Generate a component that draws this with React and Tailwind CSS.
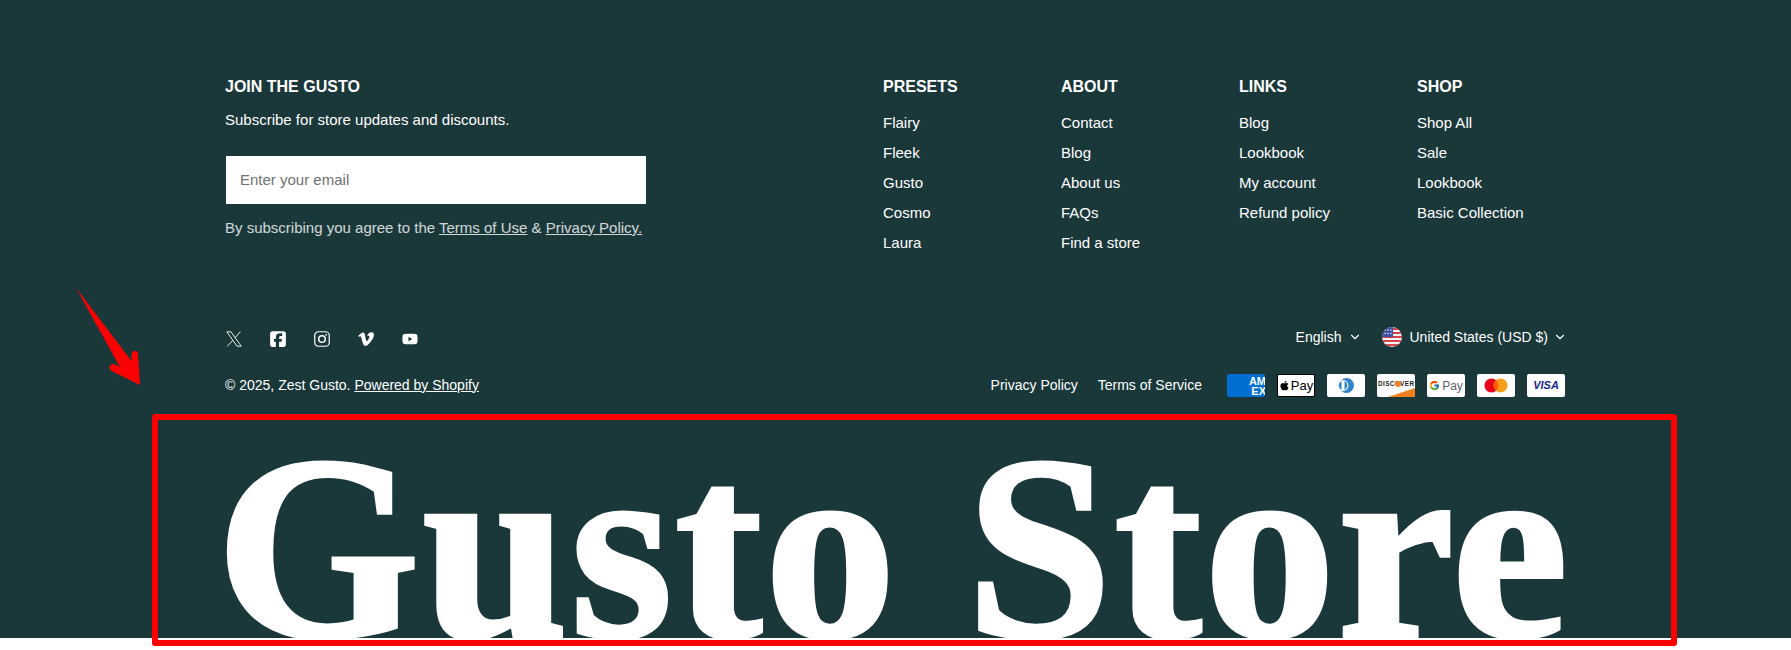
import { ChevronDown } from "lucide-react";
import { FaSquareFacebook, FaVimeoV, FaYoutube, FaApple } from "react-icons/fa6";
import { FcGoogle } from "react-icons/fc";

const COLUMNS = [
  { title: "PRESETS", width: "w-[178px]", links: ["Flairy", "Fleek", "Gusto", "Cosmo", "Laura"] },
  { title: "ABOUT", width: "w-[178px]", links: ["Contact", "Blog", "About us", "FAQs", "Find a store"] },
  { title: "LINKS", width: "w-[178px]", links: ["Blog", "Lookbook", "My account", "Refund policy"] },
  { title: "SHOP", width: "w-[150px]", links: ["Shop All", "Sale", "Lookbook", "Basic Collection"] },
];

function XIcon() {
  return (
    <svg width="16" height="16" viewBox="0 0 16 16" fill="none" stroke="white" strokeWidth="0.9">
      <path d="M0.8 0.8H5L15.2 15.2H11Z" />
      <path d="M14.4 0.6L9 6.8" />
      <path d="M7 9.2L1.2 15.4" />
    </svg>
  );
}

function InstagramIcon() {
  return (
    <svg width="16" height="16" viewBox="0 0 16 16" fill="none" stroke="white">
      <rect x="0.75" y="0.75" width="14.5" height="14.5" rx="3.6" strokeWidth="1.2" />
      <circle cx="8" cy="8" r="3.3" strokeWidth="1.5" />
      <circle cx="12.2" cy="3.8" r="0.9" fill="white" stroke="none" />
    </svg>
  );
}

function Flag() {
  return (
    <svg width="20" height="20" viewBox="0 0 20 20" className="shrink-0">
      <defs>
        <clipPath id="flag-clip">
          <circle cx="10" cy="10" r="10" />
        </clipPath>
      </defs>
      <g clipPath="url(#flag-clip)">
        <rect width="20" height="20" fill="#f4f4f4" />
        <rect y="1" width="20" height="2" fill="#d9424d" />
        <rect y="5" width="20" height="2" fill="#d9424d" />
        <rect y="9" width="20" height="2" fill="#d9424d" />
        <rect y="13" width="20" height="2" fill="#d9424d" />
        <rect y="17" width="20" height="2" fill="#d9424d" />
        <rect width="11" height="10" fill="#3f51a3" />
        <circle cx="3" cy="3" r="0.7" fill="white" />
        <circle cx="6" cy="3" r="0.7" fill="white" />
        <circle cx="9" cy="3" r="0.7" fill="white" />
        <circle cx="3" cy="6.5" r="0.7" fill="white" />
        <circle cx="6" cy="6.5" r="0.7" fill="white" />
        <circle cx="9" cy="6.5" r="0.7" fill="white" />
      </g>
    </svg>
  );
}

function Card({ children, className = "" }) {
  return <div className={`relative flex h-[23px] w-[38px] items-center justify-center overflow-hidden rounded-[2px] ${className || "bg-white"}`}>{children}</div>;
}

function PaymentIcons() {
  return (
    <div className="flex gap-3">
      <Card className="bg-[#016fd0]">
        <svg width="38" height="23" viewBox="0 0 38 23">
          <text x="39" y="11" textAnchor="end" fontSize="11" fontWeight="700" fill="white" fontFamily="Liberation Sans">AM</text>
          <text x="39" y="21" textAnchor="end" fontSize="11" fontWeight="700" fill="white" fontFamily="Liberation Sans">EX</text>
        </svg>
      </Card>
      <Card className="gap-[1px] border border-black bg-white text-black">
        <FaApple size={11} />
        <span className="text-[13px] leading-none">Pay</span>
      </Card>
      <Card>
        <svg width="38" height="23" viewBox="0 0 38 23">
          <circle cx="19.5" cy="11.5" r="7.5" fill="#3086c8" />
          <circle cx="16" cy="11.5" r="5.4" fill="white" />
          <path d="M14.5 7a5 5 0 0 0 0 9z" fill="#3086c8" />
          <path d="M17.5 7a5 5 0 0 1 0 9z" fill="#3086c8" />
        </svg>
      </Card>
      <Card>
        <svg width="38" height="23" viewBox="0 0 38 23">
          <path d="M11 23L38 14v9z" fill="#f48120" />
          <text x="1" y="12" fontSize="6.4" fontWeight="700" fill="#231f20" fontFamily="Liberation Sans" textLength="36">DISCOVER</text>
          <circle cx="21" cy="10" r="3" fill="#f48120" />
        </svg>
      </Card>
      <Card className="gap-[2px] bg-white text-[#5f6368]">
        <FcGoogle size={11} />
        <span className="text-[12px] leading-none">Pay</span>
      </Card>
      <Card>
        <svg width="38" height="23" viewBox="0 0 38 23">
          <circle cx="14.5" cy="11.5" r="7" fill="#eb001b" />
          <circle cx="23.5" cy="11.5" r="7" fill="#f79e1b" />
          <path d="M19 6.1a7 7 0 0 1 0 10.8a7 7 0 0 1 0-10.8z" fill="#ff5f00" />
        </svg>
      </Card>
      <Card>
        <span className="text-[11px] leading-none font-bold italic text-[#142688]">VISA</span>
      </Card>
    </div>
  );
}

export default function App() {
  return (
    <div className="relative min-h-[650px] overflow-hidden bg-white font-['Liberation_Sans',Arial,sans-serif] text-white">
      <footer className="h-[638px] overflow-hidden bg-[#1a373a] pt-[77px] pr-[224px] pl-[225px]">
        <div className="flex">
          <div className="flex-1">
            <h2 className="text-base leading-5 font-bold">JOIN THE GUSTO</h2>
            <p className="mt-[13px] text-[15px] leading-5">Subscribe for store updates and discounts.</p>
            <input
              placeholder="Enter your email"
              className="mt-[26px] ml-px block h-12 w-[420px] bg-white px-3.5 pb-0.5 text-[15px] text-black outline-none placeholder:text-[#707070]"
            />
            <p className="mt-3.5 text-[15px] leading-5 text-white/80">
              By subscribing you agree to the <a className="underline">Terms of Use</a> &amp; <a className="underline">Privacy Policy.</a>
            </p>
          </div>
          {COLUMNS.map((col) => (
            <div key={col.title} className={col.width}>
              <h2 className="text-base leading-5 font-bold">{col.title}</h2>
              <ul className="mt-4 flex flex-col gap-2.5">
                {col.links.map((link) => (
                  <li key={link} className="text-[15px] leading-5">{link}</li>
                ))}
              </ul>
            </div>
          ))}
        </div>

        <div className="mt-[75px] flex items-start justify-between">
          <div className="flex items-center gap-[28px] pt-[3px] pl-px">
            <XIcon />
            <span className="flex h-4 w-4 items-center justify-center"><FaSquareFacebook size={18} /></span>
            <InstagramIcon />
            <span className="flex h-4 w-4 items-center justify-center"><FaVimeoV size={18} /></span>
            <span className="flex h-4 w-4 items-center justify-center"><FaYoutube size={16} /></span>
          </div>
          <div className="-mt-px flex items-center text-[14px] leading-5">
            <span>English</span>
            <ChevronDown size={14} strokeWidth={2} className="mr-5 ml-1.5" />
            <Flag />
            <span className="ml-2">United States (USD $)</span>
            <ChevronDown size={14} strokeWidth={2} className="ml-[5px]" />
          </div>
        </div>

        <div className="mt-[27px] flex items-center justify-between text-[14px] leading-5">
          <p className="pb-0.5">
            © 2025, Zest Gusto. <a className="underline">Powered by Shopify</a>
          </p>
          <div className="mr-0.5 flex items-center">
            <a className="pb-0.5">Privacy Policy</a>
            <a className="ml-5 pb-0.5">Terms of Service</a>
            <div className="ml-[25px]">
              <PaymentIcons />
            </div>
          </div>
        </div>

        <div className="mt-5 -ml-[9px] font-['Liberation_Serif',serif] text-[262px] leading-none font-bold tracking-[2.5px] whitespace-nowrap [-webkit-text-stroke:4px_white]">Gusto Store</div>
      </footer>

      {/* red annotation over the screenshot */}
      <div className="pointer-events-none absolute top-[414px] left-[152px] h-[232px] w-[1525px] rounded-[3px] border-[6px] border-[#ff0000]" />
      <svg className="pointer-events-none absolute top-0 left-0" width="200" height="400" viewBox="0 0 200 400">
        <path d="M76 288L131.5 361L131.5 354Q132 351 135 351Q138 351 138 354L140 385L111.5 371Q108.5 368 110 365.5Q112 363 115 364.5L120 367Z" fill="#ff0000" />
      </svg>
    </div>
  );
}
